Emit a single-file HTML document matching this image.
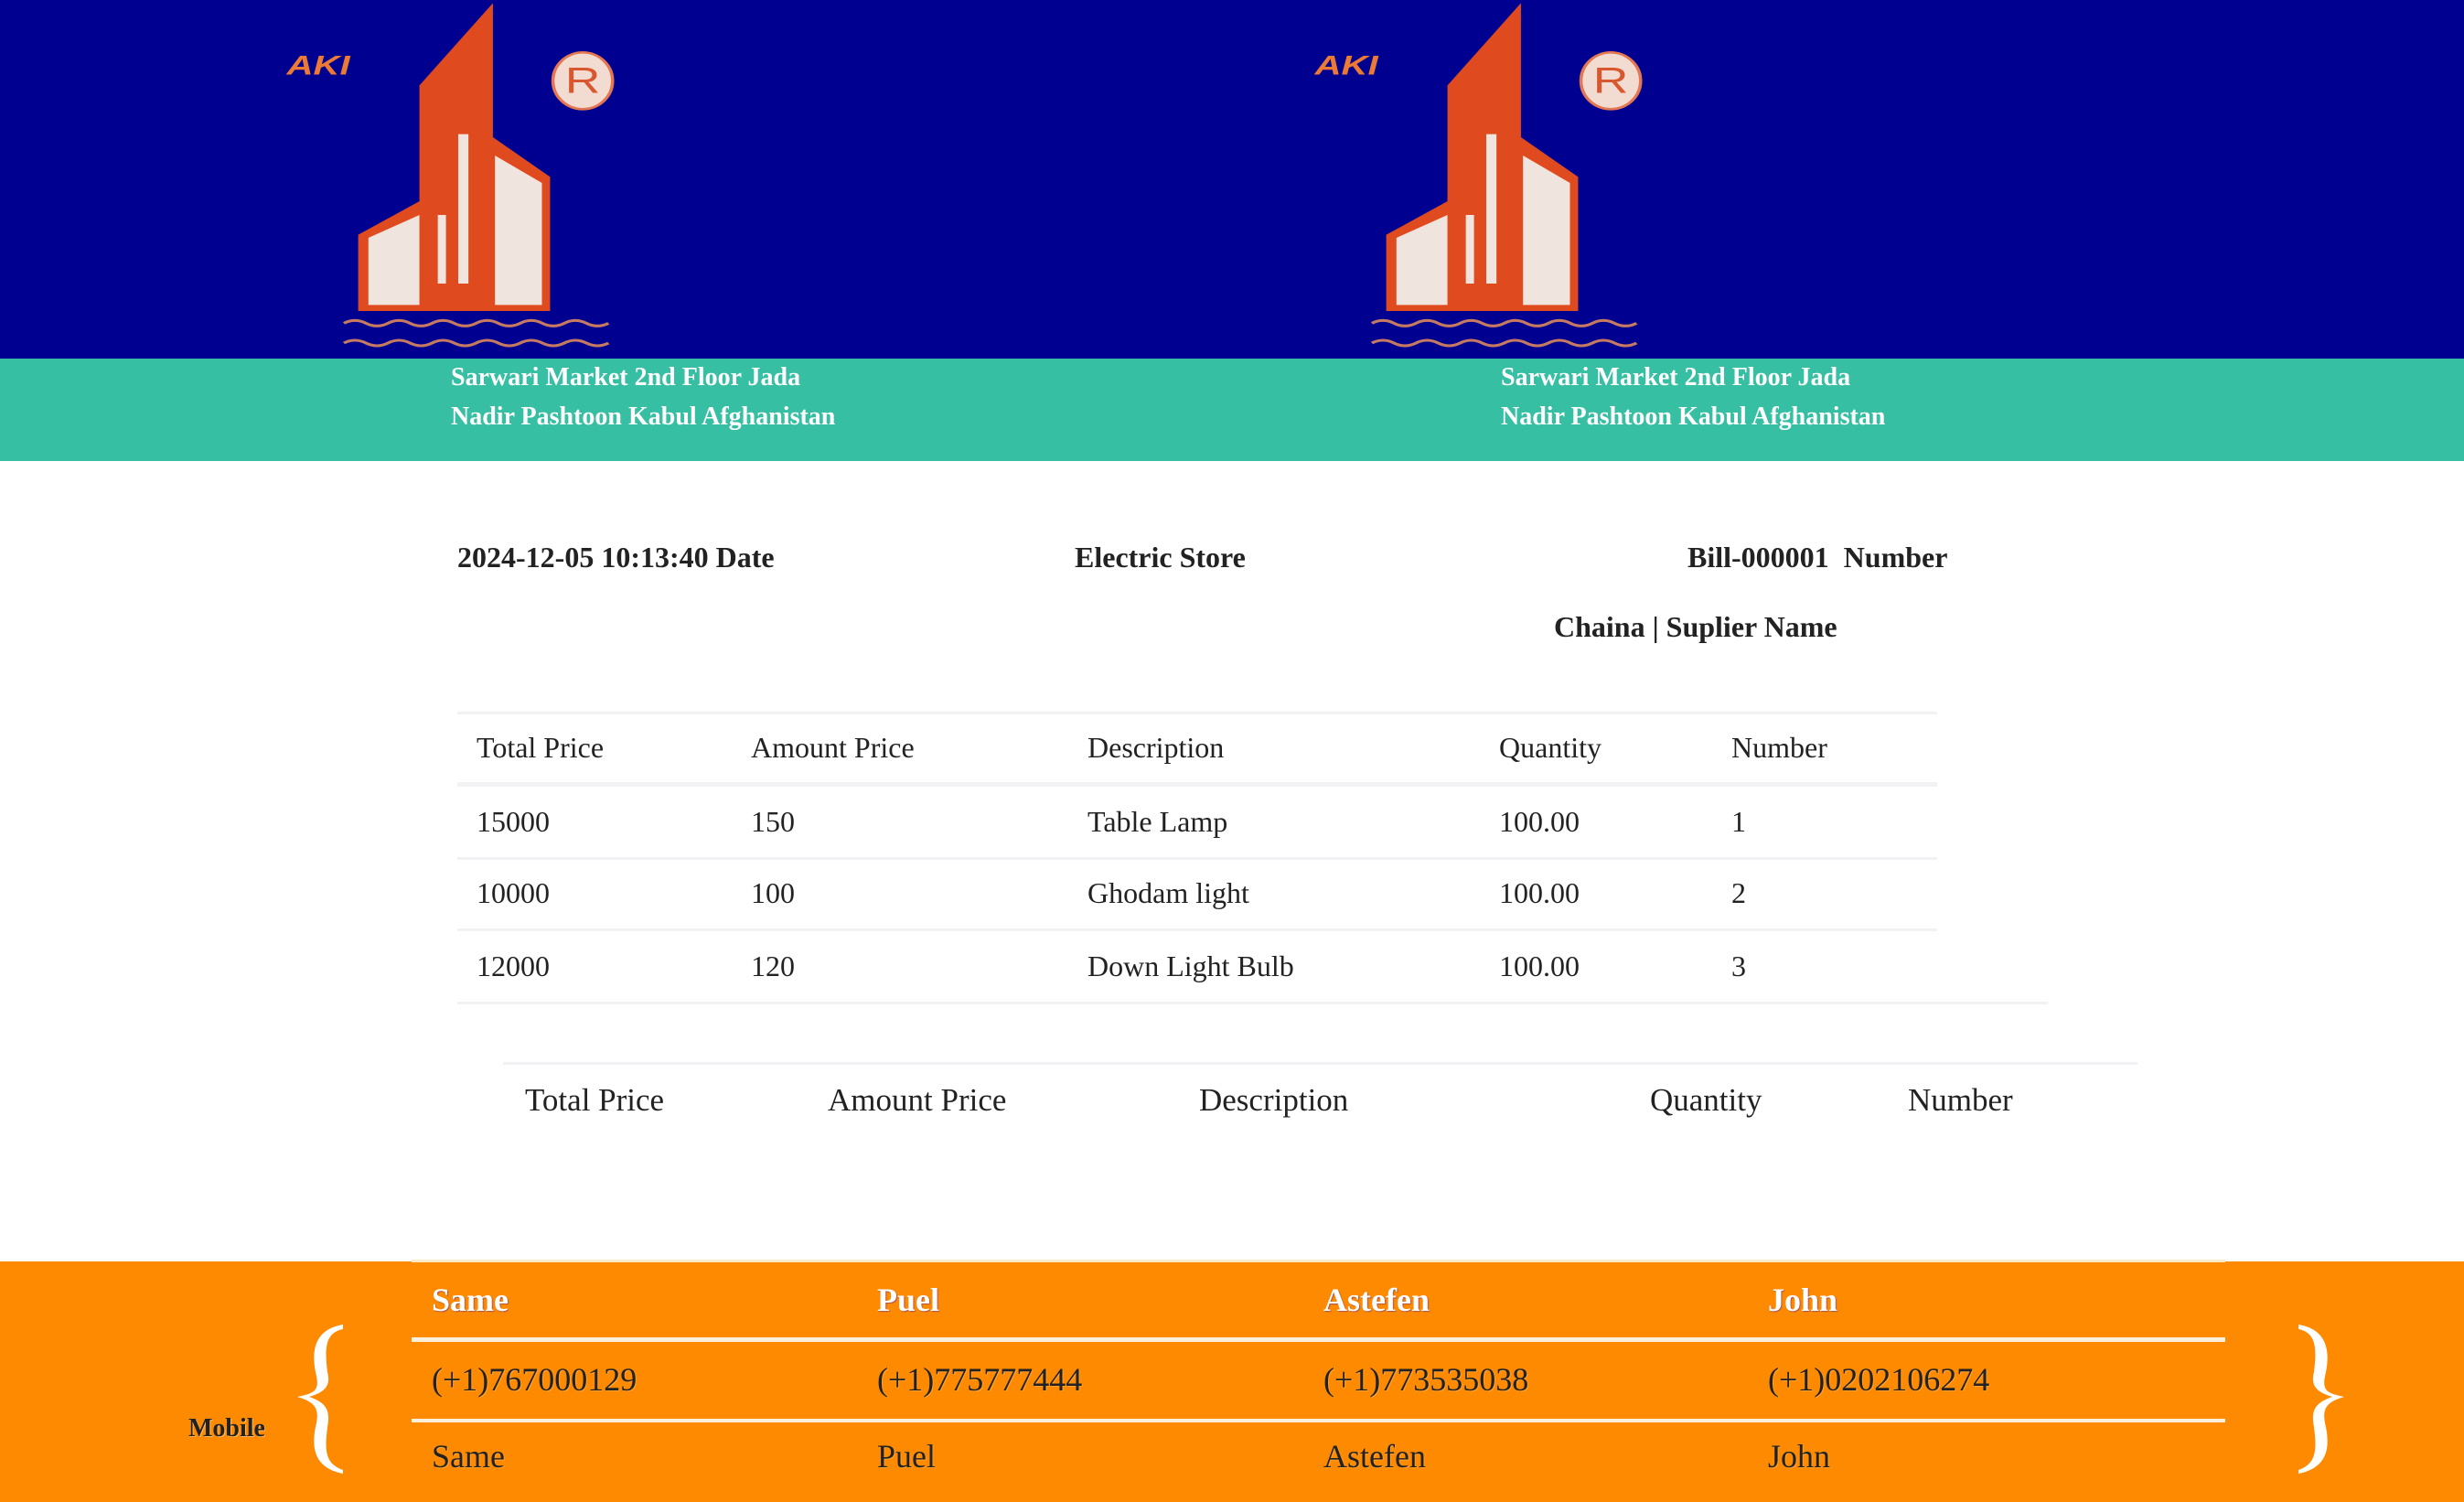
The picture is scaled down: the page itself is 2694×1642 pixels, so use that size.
<!DOCTYPE html>
<html><head><meta charset="utf-8"><style>
*{margin:0;padding:0;box-sizing:border-box}
body{width:2694px;height:1642px;position:relative;overflow:hidden;background:#fff;font-family:"Liberation Serif",serif;color:#222}
.a{position:absolute;white-space:nowrap;line-height:1}
.b{font-weight:bold}
.t{font-size:32px}
.h2{font-size:35px}
.ln{position:absolute;height:3px;background:#f2f2f4}
.f{font-size:36px;color:#222;text-shadow:1px 1px 0 #fff3}
.fh{font-size:36px;color:#fff;font-weight:bold;text-shadow:1px 1px 1px #a55}
</style></head><body>
<div class="a" style="left:0;top:0;width:2694px;height:392px;background:#000090"></div>
<div class="a" style="left:0;top:392px;width:2694px;height:112px;background:#36bfa2"></div>

<svg class="a" style="left:280px;top:0" width="700" height="392" viewBox="0 0 1568 1176" preserveAspectRatio="none">
<text x="75" y="245" font-family="Liberation Sans" font-weight="bold" font-style="italic" font-size="90" fill="#ec7a35">AKI</text>
<polygon points="400,280 580,10 580,450 720,580 720,1020 250,1020 250,770 400,660" fill="#df4a1f"/>
<polygon points="275,780 400,705 400,1000 275,1000" fill="#f0e4de"/>
<polygon points="585,510 700,600 700,1000 585,1000" fill="#f0e4de"/>
<rect x="445" y="705" width="20" height="225" fill="#f0e4de"/>
<rect x="495" y="440" width="25" height="490" fill="#f0e4de"/>
<ellipse cx="800" cy="265" rx="73" ry="93" fill="#f2dcd2" stroke="#e47652" stroke-width="8"/>
<text x="800" y="305" text-anchor="middle" font-family="Liberation Sans" font-size="120" fill="#d9572f">R</text>
<path d="M215 1060 q27 -18 54 0 t54 0 t54 0 t54 0 t54 0 t54 0 t54 0 t54 0 t54 0 t54 0 t54 0 t54 0" fill="none" stroke="#c67a62" stroke-width="9"/>
<path d="M215 1125 q27 -18 54 0 t54 0 t54 0 t54 0 t54 0 t54 0 t54 0 t54 0 t54 0 t54 0 t54 0 t54 0" fill="none" stroke="#c67a62" stroke-width="9"/>
</svg>
<svg class="a" style="left:1404px;top:0" width="700" height="392" viewBox="0 0 1568 1176" preserveAspectRatio="none">
<text x="75" y="245" font-family="Liberation Sans" font-weight="bold" font-style="italic" font-size="90" fill="#ec7a35">AKI</text>
<polygon points="400,280 580,10 580,450 720,580 720,1020 250,1020 250,770 400,660" fill="#df4a1f"/>
<polygon points="275,780 400,705 400,1000 275,1000" fill="#f0e4de"/>
<polygon points="585,510 700,600 700,1000 585,1000" fill="#f0e4de"/>
<rect x="445" y="705" width="20" height="225" fill="#f0e4de"/>
<rect x="495" y="440" width="25" height="490" fill="#f0e4de"/>
<ellipse cx="800" cy="265" rx="73" ry="93" fill="#f2dcd2" stroke="#e47652" stroke-width="8"/>
<text x="800" y="305" text-anchor="middle" font-family="Liberation Sans" font-size="120" fill="#d9572f">R</text>
<path d="M215 1060 q27 -18 54 0 t54 0 t54 0 t54 0 t54 0 t54 0 t54 0 t54 0 t54 0 t54 0 t54 0 t54 0" fill="none" stroke="#c67a62" stroke-width="9"/>
<path d="M215 1125 q27 -18 54 0 t54 0 t54 0 t54 0 t54 0 t54 0 t54 0 t54 0 t54 0 t54 0 t54 0 t54 0" fill="none" stroke="#c67a62" stroke-width="9"/>
</svg>

<div class="a b" style="left:493px;top:399px;font-size:28px;color:#fff">Sarwari Market 2nd Floor Jada</div>
<div class="a b" style="left:493px;top:442px;font-size:28px;color:#fff">Nadir Pashtoon Kabul Afghanistan</div>
<div class="a b" style="left:1641px;top:399px;font-size:28px;color:#fff">Sarwari Market 2nd Floor Jada</div>
<div class="a b" style="left:1641px;top:442px;font-size:28px;color:#fff">Nadir Pashtoon Kabul Afghanistan</div>

<div class="a b t" style="left:500px;top:593px">2024-12-05 10:13:40 Date</div>
<div class="a b t" style="left:1175px;top:593px">Electric Store</div>
<div class="a b t" style="left:1845px;top:593px">Bill-000001&nbsp; Number</div>
<div class="a b t" style="left:1699px;top:669px">Chaina | Suplier Name</div>

<div class="ln" style="left:500px;top:778px;width:1618px"></div>
<div class="ln" style="left:500px;top:855px;width:1618px;height:5px"></div>
<div class="ln" style="left:500px;top:937px;width:1618px"></div>
<div class="ln" style="left:500px;top:1015px;width:1618px"></div>
<div class="ln" style="left:500px;top:1095px;width:1739px"></div>
<div class="ln" style="left:550px;top:1161px;width:1787px"></div>

<div class="a t" style="left:521px;top:801px">Total Price</div>
<div class="a t" style="left:821px;top:801px">Amount Price</div>
<div class="a t" style="left:1189px;top:801px">Description</div>
<div class="a t" style="left:1639px;top:801px">Quantity</div>
<div class="a t" style="left:1893px;top:801px">Number</div>

<div class="a t" style="left:521px;top:882px">15000</div>
<div class="a t" style="left:821px;top:882px">150</div>
<div class="a t" style="left:1189px;top:882px">Table Lamp</div>
<div class="a t" style="left:1639px;top:882px">100.00</div>
<div class="a t" style="left:1893px;top:882px">1</div>

<div class="a t" style="left:521px;top:960px">10000</div>
<div class="a t" style="left:821px;top:960px">100</div>
<div class="a t" style="left:1189px;top:960px">Ghodam light</div>
<div class="a t" style="left:1639px;top:960px">100.00</div>
<div class="a t" style="left:1893px;top:960px">2</div>

<div class="a t" style="left:521px;top:1040px">12000</div>
<div class="a t" style="left:821px;top:1040px">120</div>
<div class="a t" style="left:1189px;top:1040px">Down Light Bulb</div>
<div class="a t" style="left:1639px;top:1040px">100.00</div>
<div class="a t" style="left:1893px;top:1040px">3</div>

<div class="a h2" style="left:574px;top:1185px">Total Price</div>
<div class="a h2" style="left:905px;top:1185px">Amount Price</div>
<div class="a h2" style="left:1311px;top:1185px">Description</div>
<div class="a h2" style="left:1804px;top:1185px">Quantity</div>
<div class="a h2" style="left:2086px;top:1185px">Number</div>

<div class="a" style="left:0;top:1379px;width:2694px;height:263px;background:#fd8a00"></div>
<div class="a" style="left:450px;top:1377px;width:1983px;height:3px;background:#fbe9c8"></div>
<div class="a" style="left:450px;top:1462px;width:1983px;height:5px;background:#fbf0dc"></div>
<div class="a" style="left:450px;top:1551px;width:1983px;height:4px;background:#fbf0dc"></div>

<div class="a fh" style="left:472px;top:1403px">Same</div>
<div class="a fh" style="left:959px;top:1403px">Puel</div>
<div class="a fh" style="left:1447px;top:1403px">Astefen</div>
<div class="a fh" style="left:1933px;top:1403px">John</div>

<div class="a f" style="left:472px;top:1490px">(+1)767000129</div>
<div class="a f" style="left:959px;top:1490px">(+1)775777444</div>
<div class="a f" style="left:1447px;top:1490px">(+1)773535038</div>
<div class="a f" style="left:1933px;top:1490px">(+1)0202106274</div>

<div class="a f" style="left:472px;top:1574px">Same</div>
<div class="a f" style="left:959px;top:1574px">Puel</div>
<div class="a f" style="left:1447px;top:1574px">Astefen</div>
<div class="a f" style="left:1933px;top:1574px">John</div>

<div class="a b" style="left:206px;top:1548px;font-size:28px;color:#222;text-shadow:1px 1px 0 #fff6">Mobile</div>

<svg class="a" style="left:320px;top:1445px" width="60" height="170" viewBox="0 0 60 170">
<path d="M55 3 C25 8 20 30 25 55 C30 75 25 78 5 82 C25 88 30 95 25 115 C20 140 25 160 55 166 L55 162 C35 155 35 140 38 115 C42 95 35 88 18 82 C35 77 42 70 38 55 C35 30 35 12 55 8 Z" fill="#fff"/>
</svg>
<svg class="a" style="left:2508px;top:1445px" width="60" height="170" viewBox="0 0 60 170">
<g transform="translate(60,0) scale(-1,1)">
<path d="M55 3 C25 8 20 30 25 55 C30 75 25 78 5 82 C25 88 30 95 25 115 C20 140 25 160 55 166 L55 162 C35 155 35 140 38 115 C42 95 35 88 18 82 C35 77 42 70 38 55 C35 30 35 12 55 8 Z" fill="#fff"/>
</g>
</svg>
</body></html>
